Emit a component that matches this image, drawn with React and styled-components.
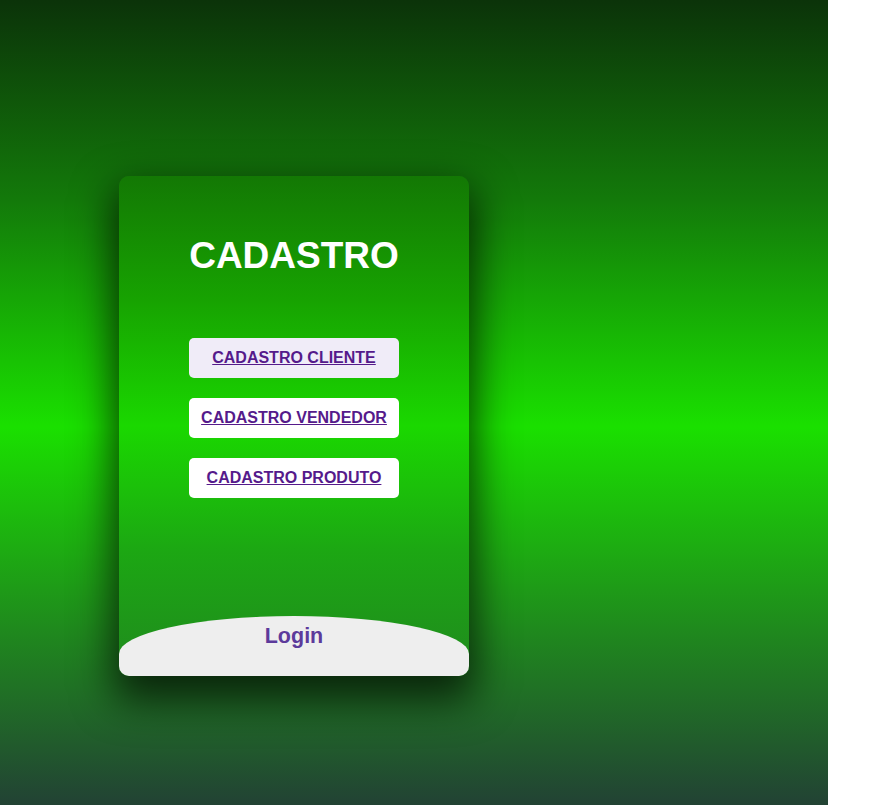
import React from "react";
import styled, { createGlobalStyle } from "styled-components";

const Global = createGlobalStyle`
  html, body { margin: 0; padding: 0; background: #fff; }
  body { font-family: "Liberation Sans", Arial, sans-serif; }
`;

const Page = styled.div`
  width: 828px;
  min-height: 805px;
  box-sizing: border-box;
  padding: 176px 0 0 119px;
  background: linear-gradient(to bottom, #0b3309 0%, #137a0a 25%, #1ae000 53%, #1f8a1d 78%, #224234 100%);
`;

const Card = styled.div`
  width: 350px;
  height: 500px;
  border-radius: 10px;
  overflow: hidden;
  display: flex;
  flex-direction: column;
  align-items: center;
  box-sizing: border-box;
  padding-top: 61px;
  background: linear-gradient(to bottom, #137804 0%, #17a301 25%, #1ad800 50%, #1ca713 75%, #208a1e 100%);
  box-shadow: 0 18px 40px 6px rgba(0, 0, 0, 0.7);
`;

const Title = styled.h1`
  margin: 0 0 64px;
  font-size: 37px;
  line-height: 37px;
  font-weight: bold;
  color: #fff;
`;

const Menu = styled.nav`
  display: flex;
  flex-direction: column;
  gap: 20px;
`;

const MenuButton = styled.a`
  display: block;
  width: 210px;
  height: 40px;
  line-height: 40px;
  border-radius: 5px;
  text-align: center;
  background: ${(p) => (p.$active ? "#f0ecf8" : "#ffffff")};
  color: #551a8b;
  font-size: 16px;
  font-weight: bold;
  text-decoration: underline;
`;

const Footer = styled.div`
  margin-top: auto;
  width: 100%;
  height: 60px;
  box-sizing: border-box;
  padding-top: 10px;
  background: #eeeeee;
  border-radius: 175px 175px 0 0 / 38px 38px 0 0;
  text-align: center;
`;

const LoginLink = styled.span`
  font-size: 21.5px;
  line-height: 21px;
  font-weight: bold;
  color: #5c3a9b;
`;

export default function App() {
  return (
    <>
      <Global />
      <Page>
        <Card>
          <Title>CADASTRO</Title>
          <Menu>
            <MenuButton href="#cliente" $active>CADASTRO CLIENTE</MenuButton>
            <MenuButton href="#vendedor">CADASTRO VENDEDOR</MenuButton>
            <MenuButton href="#produto">CADASTRO PRODUTO</MenuButton>
          </Menu>
          <Footer>
            <LoginLink>Login</LoginLink>
          </Footer>
        </Card>
      </Page>
    </>
  );
}
